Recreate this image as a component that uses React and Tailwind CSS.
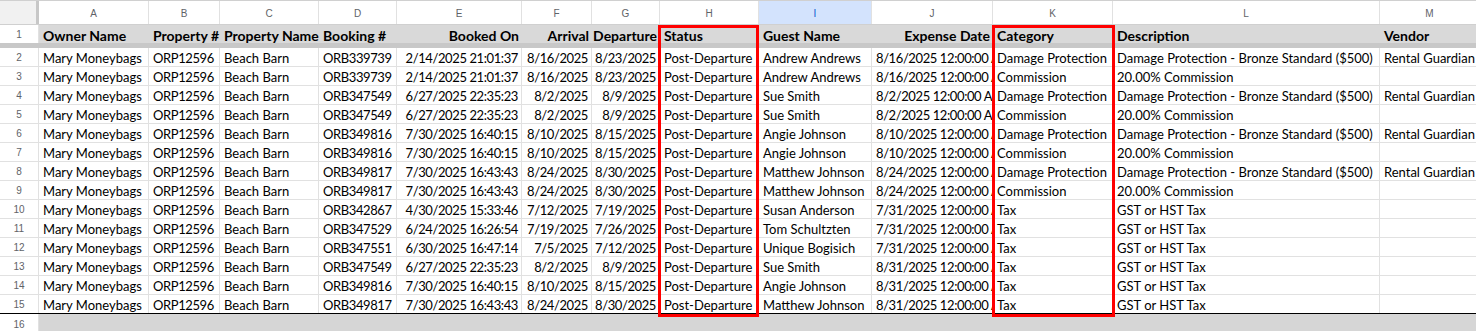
const COLS = [
  { l: 'A', w: 110 },
  { l: 'B', w: 71, n: true },
  { l: 'C', w: 99 },
  { l: 'D', w: 78, n: true },
  { l: 'E', w: 125, r: true, n: true },
  { l: 'F', w: 70, r: true, n: true },
  { l: 'G', w: 68, r: true, n: true },
  { l: 'H', w: 99 },
  { l: 'I', w: 113 },
  { l: 'J', w: 121, n: true },
  { l: 'K', w: 120 },
  { l: 'L', w: 267 },
  { l: 'M', w: 100 },
];

const HEAD = ['Owner Name', 'Property #', 'Property Name', 'Booking #', 'Booked On', 'Arrival', 'Departure', 'Status', 'Guest Name', 'Expense Date', 'Category', 'Description', 'Vendor'];
const HEAD_RIGHT = [4, 5, 6, 9];

const DP = 'Damage Protection - Bronze Standard ($500)';
const COM = '20.00% Commission';
const TAX = 'GST or HST Tax';
const RG = 'Rental Guardian';

const base = (b, bo, a, d, g, e, cat, desc, v) => ['Mary Moneybags', 'ORP12596', 'Beach Barn', b, bo, a, d, 'Post-Departure', g, e, cat, desc, v];

const ROWS = [
  base('ORB339739', '2/14/2025 21:01:37', '8/16/2025', '8/23/2025', 'Andrew Andrews', '8/16/2025 12:00:00 AM', 'Damage Protection', DP, RG),
  base('ORB339739', '2/14/2025 21:01:37', '8/16/2025', '8/23/2025', 'Andrew Andrews', '8/16/2025 12:00:00 AM', 'Commission', COM, ''),
  base('ORB347549', '6/27/2025 22:35:23', '8/2/2025', '8/9/2025', 'Sue Smith', '8/2/2025 12:00:00 AM', 'Damage Protection', DP, RG),
  base('ORB347549', '6/27/2025 22:35:23', '8/2/2025', '8/9/2025', 'Sue Smith', '8/2/2025 12:00:00 AM', 'Commission', COM, ''),
  base('ORB349816', '7/30/2025 16:40:15', '8/10/2025', '8/15/2025', 'Angie Johnson', '8/10/2025 12:00:00 AM', 'Damage Protection', DP, RG),
  base('ORB349816', '7/30/2025 16:40:15', '8/10/2025', '8/15/2025', 'Angie Johnson', '8/10/2025 12:00:00 AM', 'Commission', COM, ''),
  base('ORB349817', '7/30/2025 16:43:43', '8/24/2025', '8/30/2025', 'Matthew Johnson', '8/24/2025 12:00:00 AM', 'Damage Protection', DP, RG),
  base('ORB349817', '7/30/2025 16:43:43', '8/24/2025', '8/30/2025', 'Matthew Johnson', '8/24/2025 12:00:00 AM', 'Commission', COM, ''),
  base('ORB342867', '4/30/2025 15:33:46', '7/12/2025', '7/19/2025', 'Susan Anderson', '7/31/2025 12:00:00 AM', 'Tax', TAX, ''),
  base('ORB347529', '6/24/2025 16:26:54', '7/19/2025', '7/26/2025', 'Tom Schultzten', '7/31/2025 12:00:00 AM', 'Tax', TAX, ''),
  base('ORB347551', '6/30/2025 16:47:14', '7/5/2025', '7/12/2025', 'Unique Bogisich', '7/31/2025 12:00:00 AM', 'Tax', TAX, ''),
  base('ORB347549', '6/27/2025 22:35:23', '8/2/2025', '8/9/2025', 'Sue Smith', '8/31/2025 12:00:00 AM', 'Tax', TAX, ''),
  base('ORB349816', '7/30/2025 16:40:15', '8/10/2025', '8/15/2025', 'Angie Johnson', '8/31/2025 12:00:00 AM', 'Tax', TAX, ''),
  base('ORB349817', '7/30/2025 16:43:43', '8/24/2025', '8/30/2025', 'Matthew Johnson', '8/31/2025 12:00:00 AM', 'Tax', TAX, ''),
];

function RowNum({ n, className = '' }) {
  return (
    <div className={`w-[39px] shrink-0 flex items-center justify-center pt-[1px] border-r border-[#e1e1e1] text-[10px] text-[#5f6368] font-['Liberation_Sans',Arial,sans-serif] ${className}`}>
      {n}
    </div>
  );
}

export default function App() {
  return (
    <div className="relative w-[1476px] h-[331px] overflow-hidden bg-white font-[Lato,sans-serif] text-black">
      {/* column letters */}
      <div className="flex h-[25px] border-t border-[#d0d0d0] border-b border-b-[#d0d0d0]">
        <div className="w-[39px] shrink-0 flex">
          <div className="w-[36px] bg-[#f1f1f1]" />
          <div className="w-[3px] bg-[#c7c7c7]" />
        </div>
        {COLS.map((c) => (
          <div
            key={c.l}
            style={{ width: c.w }}
            className={`shrink-0 flex items-center justify-center pt-[2px] border-r border-[#e1e1e1] text-[10px] font-['Liberation_Sans',Arial,sans-serif] ${c.l === 'I' ? 'bg-[#d3e3fd] text-[#0b57d0]' : 'bg-white text-[#5f6368]'}`}
          >
            {c.l}
          </div>
        ))}
      </div>

      {/* header row 1 */}
      <div className="flex h-[18px]">
        <RowNum n={1} />
        {COLS.map((c, i) => (
          <div
            key={c.l}
            style={{ width: c.w }}
            className={`shrink-0 overflow-hidden whitespace-nowrap bg-[#d9d9d9] font-bold text-[14px] leading-[21px] ${HEAD_RIGHT.includes(i) ? 'text-right pr-[3px]' : 'pl-[4px]'}`}
          >
            {HEAD[i]}
          </div>
        ))}
      </div>
      {/* freeze bar */}
      <div className="h-[5px] bg-[#c8c8c8]" />

      {/* data rows */}
      {ROWS.map((row, ri) => (
        <div key={ri} className={`flex h-[19px] border-b ${ri === ROWS.length - 1 ? 'border-black' : 'border-[#e1e1e1]'}`}>
          <RowNum n={ri + 2} />
          {COLS.map((c, i) => (
            <div
              key={c.l}
              style={{ width: c.w }}
              className={`shrink-0 overflow-hidden whitespace-nowrap border-r border-[#e1e1e1] text-[13px] leading-[20px] ${c.n ? 'tracking-[-0.4px]' : ''} ${c.r ? 'text-right pr-[3px]' : 'pl-[4px]'}`}
            >
              {row[i]}
            </div>
          ))}
        </div>
      ))}

      {/* row 16 */}
      <div className="flex h-[20px]">
        <RowNum n={16} />
        <div className="flex-1 bg-[#d6d6d6]" />
      </div>

      {/* highlight boxes */}
      <div className="absolute left-[658px] top-[25px] w-[101px] h-[292px] border-[3px] border-[#ff0000] pointer-events-none" />
      <div className="absolute left-[992px] top-[25px] w-[123px] h-[292px] border-[3px] border-[#ff0000] pointer-events-none" />
    </div>
  );
}
